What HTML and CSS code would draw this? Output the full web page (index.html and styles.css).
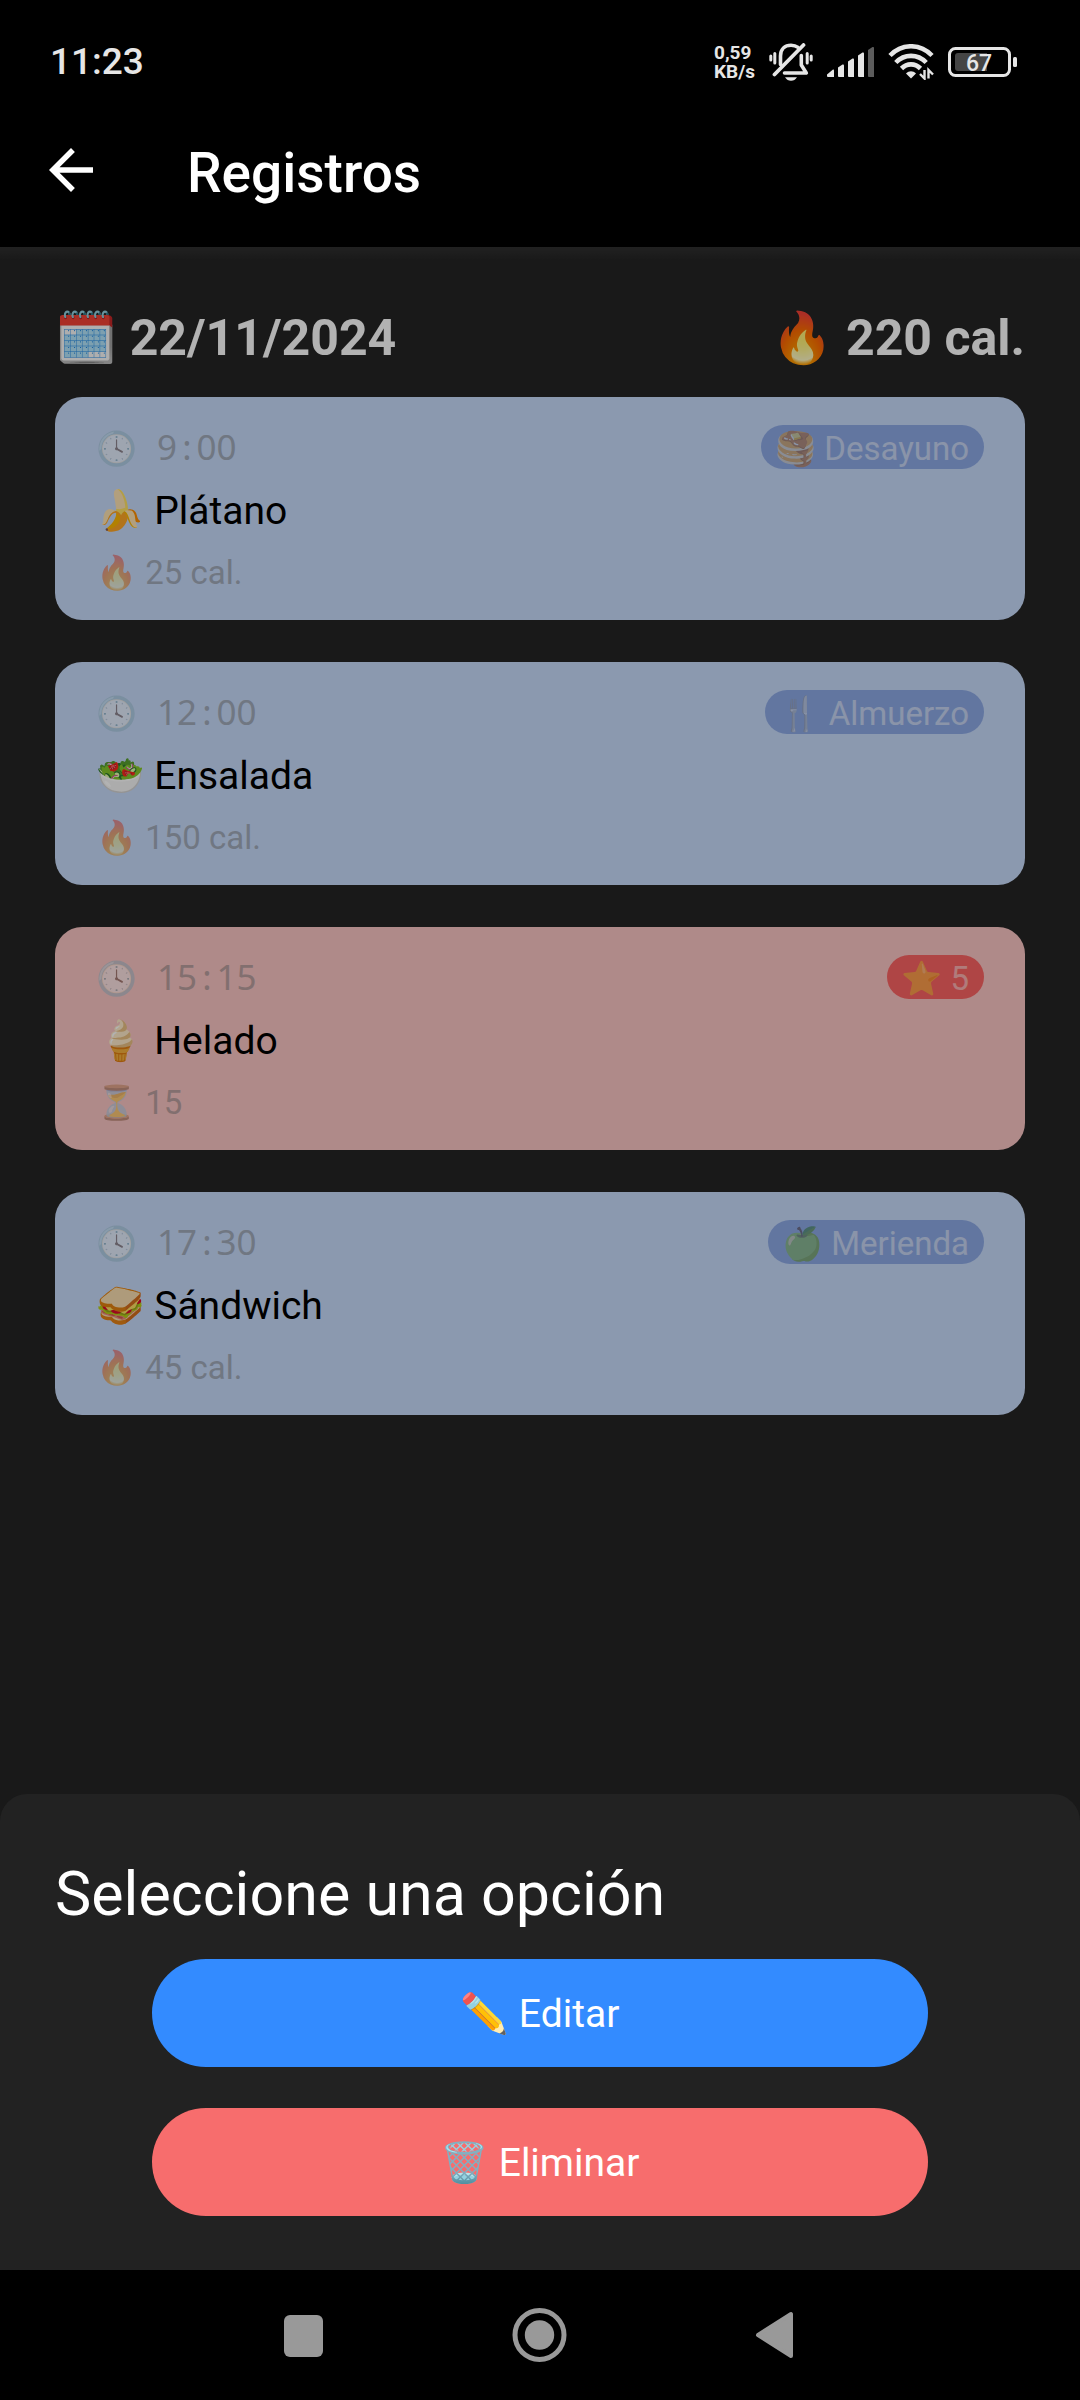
FILE: index.html
```html
<!DOCTYPE html>
<html lang="es">
<head>
<meta charset="utf-8">
<meta name="viewport" content="width=device-width, initial-scale=1">
<title>Registros</title>
<link rel="stylesheet" href="styles.css">
</head>
<body>
<div class="screen">
  <div class="status">
    <time class="clock">11:23</time>
    <div class="indicators">
      <div class="speed">0,59<br>KB/s</div>
      <svg width="44" height="38" viewBox="0 0 44 38" fill="none" stroke="#e6e6e6" stroke-linecap="round" aria-hidden="true">
        <path d="M1.8 13v4M5.8 10.500v9.500M38.200 10.500v9.500M42.200 13v4" stroke-width="3"/>
        <path d="M11.500 21.500V13C11.500 6 16 2.200 22 2.200c2.800 0 5.200.8 7 2.200" stroke-width="3.600"/>
        <path d="M32.300 12.500v9.500l5 8H15.500" stroke-width="3.600" stroke-linejoin="round"/>
        <path d="M5.500 31.500 34.500 2" stroke-width="3.800"/>
        <path d="M16 34.200h12c-1.500 2.400-3.500 3.600-6 3.600s-4.500-1.200-6-3.600z" fill="#e6e6e6" stroke="none"/>
      </svg>
      <svg width="47" height="32" viewBox="0 0 47 32" fill="#e6e6e6" aria-hidden="true">
        <path d="M0 28.500 6 23.500Q7 23 7 24.500V31H1Q0 31 0 30z"/>
        <path d="M11 21.500 15.500 18.500Q17 18 17 19.500V31H12Q11 31 11 30z"/>
        <path d="M21 15.500 25.500 12.500Q27 12 27 13.500V31H22Q21 31 21 30z"/>
        <path d="M31 9.500 35.500 6.500Q37 6 37 7.500V31H32Q31 31 31 30z"/>
        <path d="M41 4 45.500 1Q47 .5 47 2V31H42Q41 31 41 30z" fill="#5c5c5c"/>
      </svg>
      <svg width="46" height="36" viewBox="0 0 46 36" fill="none" stroke="#e6e6e6" aria-hidden="true">
        <path d="M2 11.500C14-.8 32-.8 44 11.500" stroke-width="4.600"/>
        <path d="M7.800 18.500C16.500 9.600 29.500 9.600 38.200 18.500" stroke-width="4.600"/>
        <path d="M13.500 24.500C19 19 27 19 32.500 24.500" stroke-width="4.600"/>
        <path d="M18 29.500C21 26.500 25 26.500 28 29.500L23 34.500z" fill="#e6e6e6" stroke="none"/>
        <path d="M36.500 26v8.500L32 30M40.500 34.500V26L45 30.500" stroke-width="2.400"/>
      </svg>
      <svg width="69" height="30" viewBox="0 0 69 30" role="img" aria-label="Batería 67">
        <rect x="1.500" y="1.500" width="60" height="27" rx="6" fill="none" stroke="#e6e6e6" stroke-width="3"/>
        <path d="M10 6H39V24H10Q7 24 7 21V9Q7 6 10 6z" fill="#454545"/>
        <rect x="65" y="10" width="4" height="10" rx="1.500" fill="#e6e6e6"/>
        <text x="31" y="23.500" text-anchor="middle" class="level">67</text>
      </svg>
    </div>
  </div>

  <header class="appbar">
    <button class="back" aria-label="Volver">
      <svg width="66" height="66" viewBox="0 0 24 24" fill="#fff" aria-hidden="true"><path d="M20 11H7.830l5.590-5.590L12 4l-8 8 8 8 1.410-1.410L7.830 13H20z"/></svg>
    </button>
    <h1 class="title">Registros</h1>
  </header>

  <main class="records">
    <div class="summary">
      <h2 class="total">🗓️ 22/11/2024</h2>
      <p class="total">🔥 220 cal.</p>
    </div>
    <article class="card">
      <div class="row"><span class="meta">🕓<time class="hour">9<span class="colon">:</span>00</time></span><span class="badge"><span class="badge-text">🥞 Desayuno</span></span></div>
      <h3 class="food">🍌 Plátano</h3>
      <p class="meta">🔥 25 cal.</p>
    </article>
    <article class="card">
      <div class="row"><span class="meta">🕓<time class="hour">12<span class="colon">:</span>00</time></span><span class="badge"><span class="badge-text">🍴 Almuerzo</span></span></div>
      <h3 class="food">🥗 Ensalada</h3>
      <p class="meta">🔥 150 cal.</p>
    </article>
    <article class="card card-red">
      <div class="row"><span class="meta">🕓<time class="hour">15<span class="colon">:</span>15</time></span><span class="badge"><span class="badge-text">⭐ 5</span></span></div>
      <h3 class="food">🍦 Helado</h3>
      <p class="meta">⏳ 15</p>
    </article>
    <article class="card">
      <div class="row"><span class="meta">🕓<time class="hour">17<span class="colon">:</span>30</time></span><span class="badge"><span class="badge-text">🍏 Merienda</span></span></div>
      <h3 class="food">🥪 Sándwich</h3>
      <p class="meta">🔥 45 cal.</p>
    </article>
  </main>

  <section class="sheet" role="dialog" aria-labelledby="sheet-title">
    <h2 class="sheet-title" id="sheet-title">Seleccione una opción</h2>
    <div class="actions">
      <button class="action edit">✏️ Editar</button>
      <button class="action delete">🗑️ Eliminar</button>
    </div>
  </section>

  <nav class="navbar" aria-label="Sistema">
    <button class="nav" aria-label="Recientes"><svg width="56" height="56" viewBox="0 0 56 56" fill="#999" aria-hidden="true"><rect x="8" y="8" width="39" height="42" rx="6"/></svg></button>
    <button class="nav" aria-label="Inicio"><svg width="56" height="56" viewBox="0 0 56 56" aria-hidden="true"><circle cx="27.500" cy="28" r="24.500" fill="none" stroke="#999" stroke-width="5"/><circle cx="27.500" cy="28" r="14.700" fill="#999"/></svg></button>
    <button class="nav" aria-label="Atrás"><svg width="56" height="56" viewBox="0 0 56 56" fill="#999" stroke="#999" stroke-width="4" stroke-linejoin="round" aria-hidden="true"><path d="M10 28 43 7V49z"/></svg></button>
  </nav>
</div>
</body>
</html>
```
FILE: styles.css
```css
* { box-sizing: border-box; }

body {
  margin: 0;
  background: #191919;
  font-family: Roboto, "Noto Color Emoji", sans-serif;
}

h1, h2, h3, p { margin: 0; font-weight: 400; }

button {
  border: 0;
  padding: 0;
  background: none;
  font: inherit;
  cursor: pointer;
}

svg { display: block; }

.screen {
  display: flex;
  flex-direction: column;
  min-height: 100vh;
}

/* Status bar */
.status {
  display: flex;
  align-items: center;
  justify-content: space-between;
  height: 99px;
  padding: 24px 63px 0 50px;
  background: #000;
  color: #e6e6e6;
}

.clock { font-size: 37px; font-weight: 500; }

.indicators {
  display: flex;
  align-items: center;
  gap: 14px;
}

.speed {
  font-size: 19px;
  line-height: 19px;
  font-weight: 700;
}

.level { font-size: 23px; font-weight: 500; fill: #e6e6e6; }

/* App bar */
.appbar {
  display: flex;
  align-items: center;
  gap: 83px;
  height: 148px;
  padding-left: 38px;
  background: #000;
  color: #fff;
}

.back { padding-bottom: 6px; }

.title { font-size: 55px; font-weight: 500; }

/* Records, dimmed by the scrim while the sheet is open */
.records {
  position: relative;
  flex: 1;
  display: flex;
  flex-direction: column;
  gap: 42px;
  padding: 61px 55px;
  background: linear-gradient(#303030, #242424 14px);
}

.records::after {
  content: "";
  position: absolute;
  inset: 0;
  background: rgba(0, 0, 0, 0.3);
}

.summary {
  display: flex;
  justify-content: space-between;
  margin-bottom: -13px;
}

.total {
  font-size: 50px;
  line-height: 60px;
  font-weight: 700;
  color: #fff;
}

.card {
  display: flex;
  flex-direction: column;
  gap: 8px;
  padding: 28px 41px 23px;
  border-radius: 27px;
  background: #c8dbfb;
}

.row {
  display: flex;
  justify-content: space-between;
  align-items: flex-start;
  height: 48px;
}

.meta {
  font-size: 33px;
  line-height: 48px;
  color: #7c7c7c;
  opacity: 0.5;
}

.hour {
  margin-left: 20px;
  font-family: "Noto Sans", sans-serif;
  font-size: 35px;
  line-height: 40px;
}

.colon { padding: 0 5px; }

.food {
  font-size: 39px;
  line-height: 60px;
  color: #000;
}

.badge {
  height: 44px;
  padding: 0 15px 0 14px;
  border-radius: 22px;
  background: #8daae6;
  font-size: 33px;
  line-height: 48px;
  color: #fff;
}

.badge-text { opacity: 0.5; }

.card-red { background: #fbc6c5; }

.card-red .badge { background: #fb6363; }

/* Bottom sheet */
.sheet {
  display: flex;
  flex-direction: column;
  gap: 29px;
  padding: 64px 55px 54px;
  border-radius: 27px 27px 0 0;
  background: #222;
  color: #fff;
}

.sheet-title {
  font-size: 61px;
  line-height: 72px;
}

.actions {
  display: flex;
  flex-direction: column;
  align-items: center;
  gap: 41px;
}

.action {
  width: 80%;
  height: 108px;
  padding-top: 2px;
  border-radius: 54px;
  font-size: 39px;
  color: #fff;
}

.edit { background: #338bff; }

.delete { background: #f76d6d; }

/* System navigation */
.navbar {
  display: flex;
  align-items: center;
  justify-content: center;
  gap: 180px;
  height: 130px;
  background: #000;
}
```
